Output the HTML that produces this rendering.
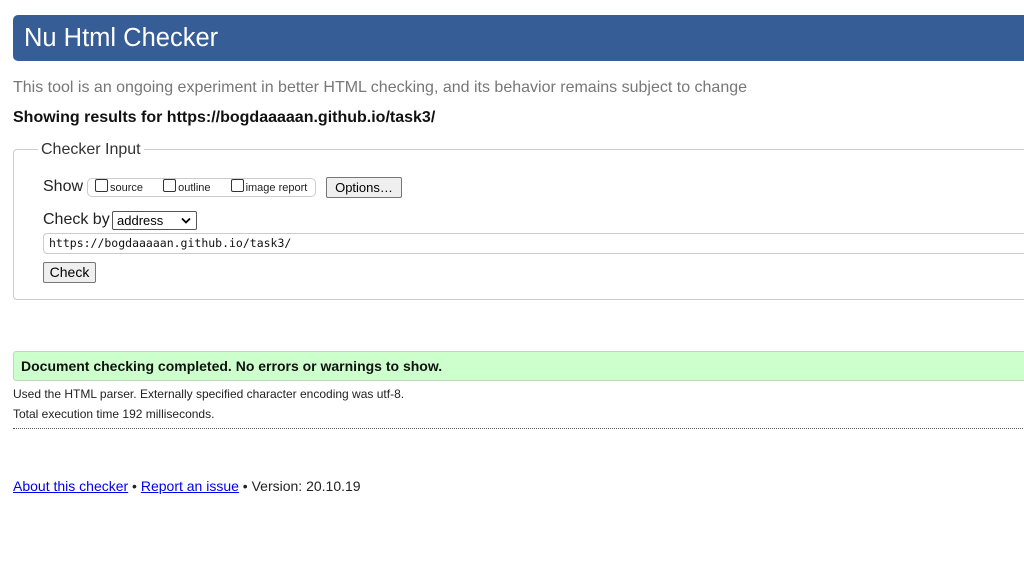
<!DOCTYPE html>
<html><head><meta charset="utf-8"><style>
body{margin:0;width:1024px;height:569px;overflow:hidden;background:#fff;font-family:"Liberation Sans",Arial,sans-serif;color:#000;position:relative}
.a{position:absolute;white-space:nowrap}
.hdr{left:13px;top:15px;width:1030px;height:46px;background:#365d95;border-radius:5px;color:#fff;font-size:25.5px;line-height:46px;padding-left:11px;box-sizing:border-box}
.fs{left:13px;top:149px;width:1030px;height:151px;border:1px solid #ccc;border-radius:4px;box-sizing:border-box}
.cb{display:inline-block;width:11px;height:11px;border:1px solid #333;border-radius:2px;vertical-align:-1px;background:#fff;margin-right:2px}
.btn{border:1px solid #767676;background:#efefef;border-radius:2px;font-size:13px;box-sizing:border-box;text-align:center}
a{color:#00e;text-decoration:underline}
</style></head><body>
<div class="a hdr">Nu Html Checker</div>
<div class="a" style="left:13px;top:79px;font-size:16px;color:#777">This tool is an ongoing experiment in better HTML checking, and its behavior remains subject to change</div>
<div class="a" style="left:13px;top:109px;font-size:16px;font-weight:bold;color:#111">Showing results for https://bogdaaaaan.github.io/task3/</div>
<div class="a fs"></div>
<div class="a" style="left:38px;top:141px;padding:0 3px;background:#fff;font-size:16px;color:#333">Checker Input</div>
<div class="a" style="left:43px;top:178px;font-size:16px;color:#222">Show</div>
<div class="a" style="left:87px;top:178px;width:229px;height:19px;border:1px solid #ccc;border-radius:5px;box-sizing:border-box;font-size:11px;line-height:18px;color:#222;padding-left:7px"><span class="cb"></span>source <span style="margin-left:17px" class="cb"></span>outline <span style="margin-left:17px" class="cb"></span>image report</div>
<div class="a btn" style="left:326px;top:177px;width:76px;height:21px;line-height:19px">Options…</div>
<div class="a" style="left:43px;top:211px;font-size:16px;color:#222">Check by</div>
<div class="a" style="left:112px;top:211px;width:85px;height:19px;border:1px solid #555;border-radius:2px;box-sizing:border-box;font-size:13px;line-height:17px;padding-left:4px">address<svg style="position:absolute;right:5px;top:5px" width="10" height="7" viewBox="0 0 10 7"><path d="M1 1.5L5 5.5L9 1.5" fill="none" stroke="#000" stroke-width="1.8"/></svg></div>
<div class="a" style="left:43px;top:233px;width:1000px;height:21px;border:1px solid #ccc;border-radius:4px;box-sizing:border-box;font-family:'DejaVu Sans Mono','Liberation Mono',monospace;font-size:11.5px;line-height:19px;padding-left:5px;color:#111">https://bogdaaaaan.github.io/task3/</div>
<div class="a btn" style="left:43px;top:262px;width:53px;height:21px;line-height:19px;font-size:14px">Check</div>
<div class="a" style="left:13px;top:351px;width:1030px;height:30px;background:#ccffcc;border:1px solid #bcd9bc;border-radius:3px;box-sizing:border-box;font-size:14px;font-weight:bold;line-height:28px;padding-left:7px;color:#111">Document checking completed. No errors or warnings to show.</div>
<div class="a" style="left:13px;top:387px;font-size:12px;color:#222">Used the HTML parser. Externally specified character encoding was utf-8.</div>
<div class="a" style="left:13px;top:407px;font-size:12px;color:#222">Total execution time 192 milliseconds.</div>
<div class="a" style="left:13px;top:428px;width:1020px;border-top:1px dotted #555"></div>
<div class="a" style="left:13px;top:478px;font-size:14px;color:#222"><a>About this checker</a> • <a>Report an issue</a> • Version: 20.10.19</div>
</body></html>
